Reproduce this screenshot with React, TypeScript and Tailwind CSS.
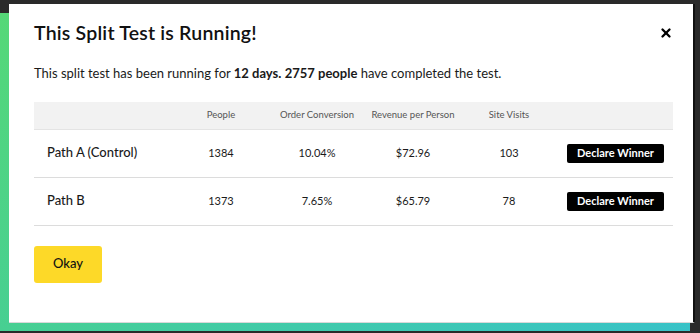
import React from 'react';
import { X } from 'lucide-react';

interface PathRow {
  name: string;
  people: number;
  conversion: string;
  revenue: string;
  visits: number;
}

const rows: PathRow[] = [
  { name: 'Path A (Control)', people: 1384, conversion: '10.04%', revenue: '$72.96', visits: 103 },
  { name: 'Path B', people: 1373, conversion: '7.65%', revenue: '$65.79', visits: 78 },
];

const cols = 'grid grid-cols-[139px_96px_96px_96px_96px_1fr] items-center';

export default function App() {
  return (
    <div
      className="relative w-[700px] h-[333px] overflow-hidden bg-[#2a2a2a]"
      style={{ fontFamily: 'Lato, "Noto Sans", sans-serif' }}
    >
      {/* backdrop panel */}
      <div className="absolute left-0 top-[13px] w-[690px] h-[318px] bg-gradient-to-br from-[#55d877] via-[#47cf92] to-[#38c2c8]" />

      {/* modal */}
      <div className="absolute left-[9px] top-[4px] w-[686px] h-[319px] bg-white border-r-2 border-r-[#111] border-b border-b-[#d9d9d9]">
        <div className="flex items-center justify-between pl-[25px] pr-[20px] pt-[16px] h-[42px]">
          <h2 className="text-[19.5px] font-semibold text-[#111] tracking-[0.2px]">This Split Test is Running!</h2>
          <X className="w-[14px] h-[14px] text-black" strokeWidth={4} />
        </div>

        <p className="pl-[25px] mt-[18px] text-[13px] text-[#1a1a1a]">
          This split test has been running for <b>12 days.</b> <b>2757 people</b> have completed the test.
        </p>

        <div className="ml-[25px] mr-[20px] mt-[18px] text-[#1a1a1a]">
          <div className={`${cols} h-[28px] bg-[#f2f2f2] text-[9.5px] text-[#555] text-center border-b border-[#e4e4e4]`}>
            <div />
            <div>People</div>
            <div>Order Conversion</div>
            <div>Revenue per Person</div>
            <div>Site Visits</div>
            <div />
          </div>
          {rows.map((r) => (
            <div key={r.name} className={`${cols} h-[48px] border-b border-[#dcdcdc] text-center text-[11px]`}>
              <div className="text-left pl-[13px] text-[13px] font-medium">{r.name}</div>
              <div>{r.people}</div>
              <div>{r.conversion}</div>
              <div>{r.revenue}</div>
              <div>{r.visits}</div>
              <div className="flex justify-end pr-[9px]">
                <button className="h-[19px] w-[97px] bg-black text-white text-[11px] font-bold rounded-[2px]">
                  Declare Winner
                </button>
              </div>
            </div>
          ))}
        </div>

        <button className="ml-[25px] mt-[20px] w-[68px] h-[37px] bg-[#fdd928] rounded-[3px] text-[13px] font-medium text-[#111]">
          Okay
        </button>
      </div>
    </div>
  );
}
